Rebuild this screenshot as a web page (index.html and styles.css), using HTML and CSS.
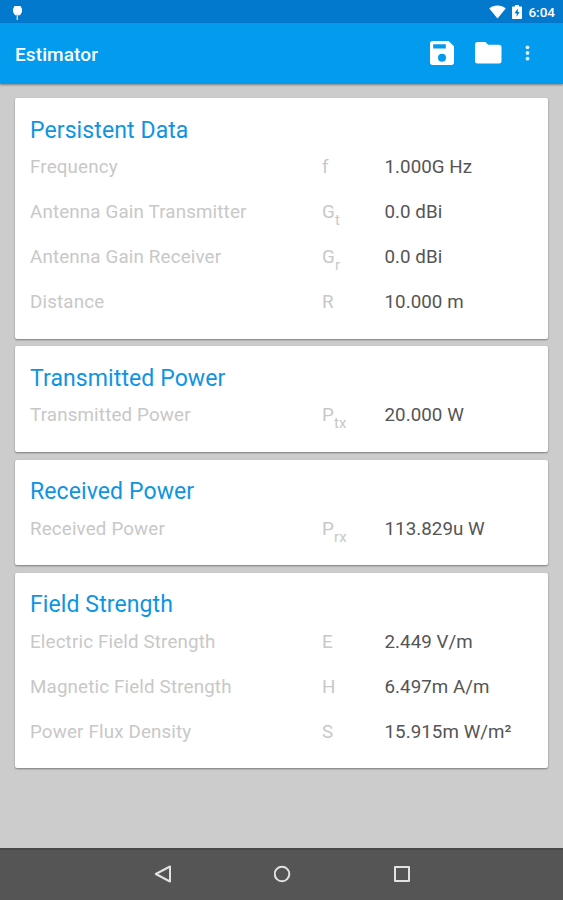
FILE: index.html
```html
<!DOCTYPE html>
<html lang="en">

<head>
    <meta charset="UTF-8">
    <meta name="viewport" content="width=device-width, initial-scale=1.0">
    <title>Estimator</title>
    <link rel="stylesheet" href="styles.css">
</head>

<body>
    <div class="status_bar">
        <svg class="pin" width="12" height="16" viewBox="0 0 12 16">
            <path d="M3.5 1h6l1.5 3v3l-2 3.2h-5L2 7V4z" fill="#fff" />
            <path d="M6.3 9v6" stroke="#b9def5" stroke-width="1.4" />
        </svg>
        <div class="status_right">
            <svg width="17" height="14" viewBox="0 0 17 14">
                <path d="M0.3 3.4C5-0.4 12-0.4 16.7 3.4L8.5 13.5z" fill="#fff" />
            </svg>
            <svg class="battery" width="10" height="14" viewBox="0 0 10 14">
                <path d="M3 0h4v1.5h2.2q.8 0 .8.8v10.9q0 .8-.8.8H.8q-.8 0-.8-.8V2.3q0-.8.8-.8H3z" fill="#fff" />
                <path d="M5.8 3.5L2.5 8.2h2.1v3.5l3-4.8H5.8z" fill="#0579ca" />
            </svg>
            <span class="clock">6:04</span>
        </div>
    </div>
    <header class="app_bar">
        <h1>Estimator</h1>
        <div class="actions">
            <svg class="save" width="24" height="24" viewBox="0 0 24 24">
                <path fill-rule="evenodd" d="M2.7 0H18.6L24 5.3V21.3Q24 24 21.3 24H2.7Q0 24 0 21.3V2.7Q0 0 2.7 0zM3.2 3.2v4.2h12.6V3.2zM12 12.8a4 4 0 1 0 0 8 4 4 0 0 0 0-8z" fill="#fff" />
            </svg>
            <svg class="folder" width="27" height="22" viewBox="0 0 27 22">
                <path d="M2.5 0H10.5L13.2 2.7H24Q26.5 2.7 26.5 5.2V19Q26.5 21.5 24 21.5H2.5Q0 21.5 0 19V2.5Q0 0 2.5 0z" fill="#fff" />
            </svg>
            <svg class="more" width="5" height="16" viewBox="0 0 5 16">
                <g fill="#d9f0fd">
                    <circle cx="2.5" cy="2.3" r="1.9" />
                    <circle cx="2.5" cy="8" r="1.9" />
                    <circle cx="2.5" cy="13.7" r="1.9" />
                </g>
            </svg>
        </div>
    </header>

    <main>
        <section class="card">
            <h2>Persistent Data</h2>
            <div class="row"><span>Frequency</span><span>f</span><span class="value">1.000G Hz</span></div>
            <div class="row"><span>Antenna Gain Transmitter</span><span>G<sub>t</sub></span><span class="value">0.0 dBi</span></div>
            <div class="row"><span>Antenna Gain Receiver</span><span>G<sub>r</sub></span><span class="value">0.0 dBi</span></div>
            <div class="row"><span>Distance</span><span>R</span><span class="value">10.000 m</span></div>
        </section>
        <section class="card">
            <h2>Transmitted Power</h2>
            <div class="row"><span>Transmitted Power</span><span>P<sub>tx</sub></span><span class="value">20.000 W</span></div>
        </section>
        <section class="card">
            <h2>Received Power</h2>
            <div class="row"><span>Received Power</span><span>P<sub>rx</sub></span><span class="value">113.829u W</span></div>
        </section>
        <section class="card">
            <h2>Field Strength</h2>
            <div class="row"><span>Electric Field Strength</span><span>E</span><span class="value">2.449 V/m</span></div>
            <div class="row"><span>Magnetic Field Strength</span><span>H</span><span class="value">6.497m A/m</span></div>
            <div class="row"><span>Power Flux Density</span><span>S</span><span class="value">15.915m W/m²</span></div>
        </section>
    </main>

    <nav class="nav_bar">
        <svg width="18" height="18" viewBox="0 0 18 18">
            <path d="M16 1.5V16.5L1.8 9z" />
        </svg>
        <svg width="18" height="18" viewBox="0 0 18 18">
            <circle cx="8" cy="9" r="7.3" />
        </svg>
        <svg width="18" height="18" viewBox="0 0 18 18">
            <rect x="2" y="2" width="14" height="14" />
        </svg>
    </nav>
</body>

</html>
```
FILE: styles.css
```css
* {
    box-sizing: border-box;
}

body {
    margin: 0;
    height: 900px;
    display: flex;
    flex-direction: column;
    background: #cccccc;
    font-family: Roboto, Arial, sans-serif;
    overflow: hidden;
}

svg {
    display: block;
    flex: none;
}

.status_bar {
    height: 23px;
    padding: 1px 8px 0 11px;
    display: flex;
    align-items: center;
    justify-content: space-between;
    background: #0279cc;
    color: #fff;
}

.pin {
    margin-top: 2px;
}

.status_right {
    display: flex;
    align-items: center;
}

.battery {
    margin-left: 6px;
}

.clock {
    margin-left: 6px;
    font-size: 13.5px;
    font-weight: 500;
    line-height: 20px;
}

.app_bar {
    height: 60.5px;
    padding: 0 33px 0 15px;
    display: flex;
    align-items: center;
    justify-content: space-between;
    background: #029bed;
    color: #fff;
    box-shadow: 0 1px 2px rgba(0, 0, 0, 0.4);
}

.app_bar h1 {
    margin: 2px 0 0;
    font-size: 19px;
    font-weight: 500;
    letter-spacing: 0.1px;
}

.actions {
    display: flex;
    align-items: center;
}

.folder {
    margin-left: 21px;
}

.more {
    margin-left: 23px;
}

main {
    flex: 1;
    padding: 14.8px 15px 0;
    display: flex;
    flex-direction: column;
    gap: 7.7px;
}

.card {
    padding: 16.5px 15px 13.3px;
    background: #fff;
    border-radius: 2px;
    box-shadow: 0 1px 2px rgba(0, 0, 0, 0.4);
}

.card h2 {
    margin: 0;
    height: 30.5px;
    line-height: 32px;
    font-size: 23px;
    font-weight: 400;
    letter-spacing: 0.1px;
    color: #0f94e2;
}

.row {
    height: 45.05px;
    display: grid;
    grid-template-columns: 292px 62.5px 1fr;
    font-size: 18.75px;
    line-height: 45.8px;
    letter-spacing: 0.16px;
    color: #c8c8c8;
    white-space: nowrap;
}

.row sub {
    font-size: 15px;
    line-height: 0;
    vertical-align: -6.5px;
}

.value {
    letter-spacing: 0.05px;
    color: #555;
}

.nav_bar {
    height: 52px;
    padding: 0 152px 2px 154px;
    display: flex;
    align-items: center;
    justify-content: space-between;
    background: #555;
    border-top: 2px solid #484848;
}

.nav_bar svg {
    fill: none;
    stroke: #e2e2e2;
    stroke-width: 2;
    stroke-linejoin: round;
}
```
